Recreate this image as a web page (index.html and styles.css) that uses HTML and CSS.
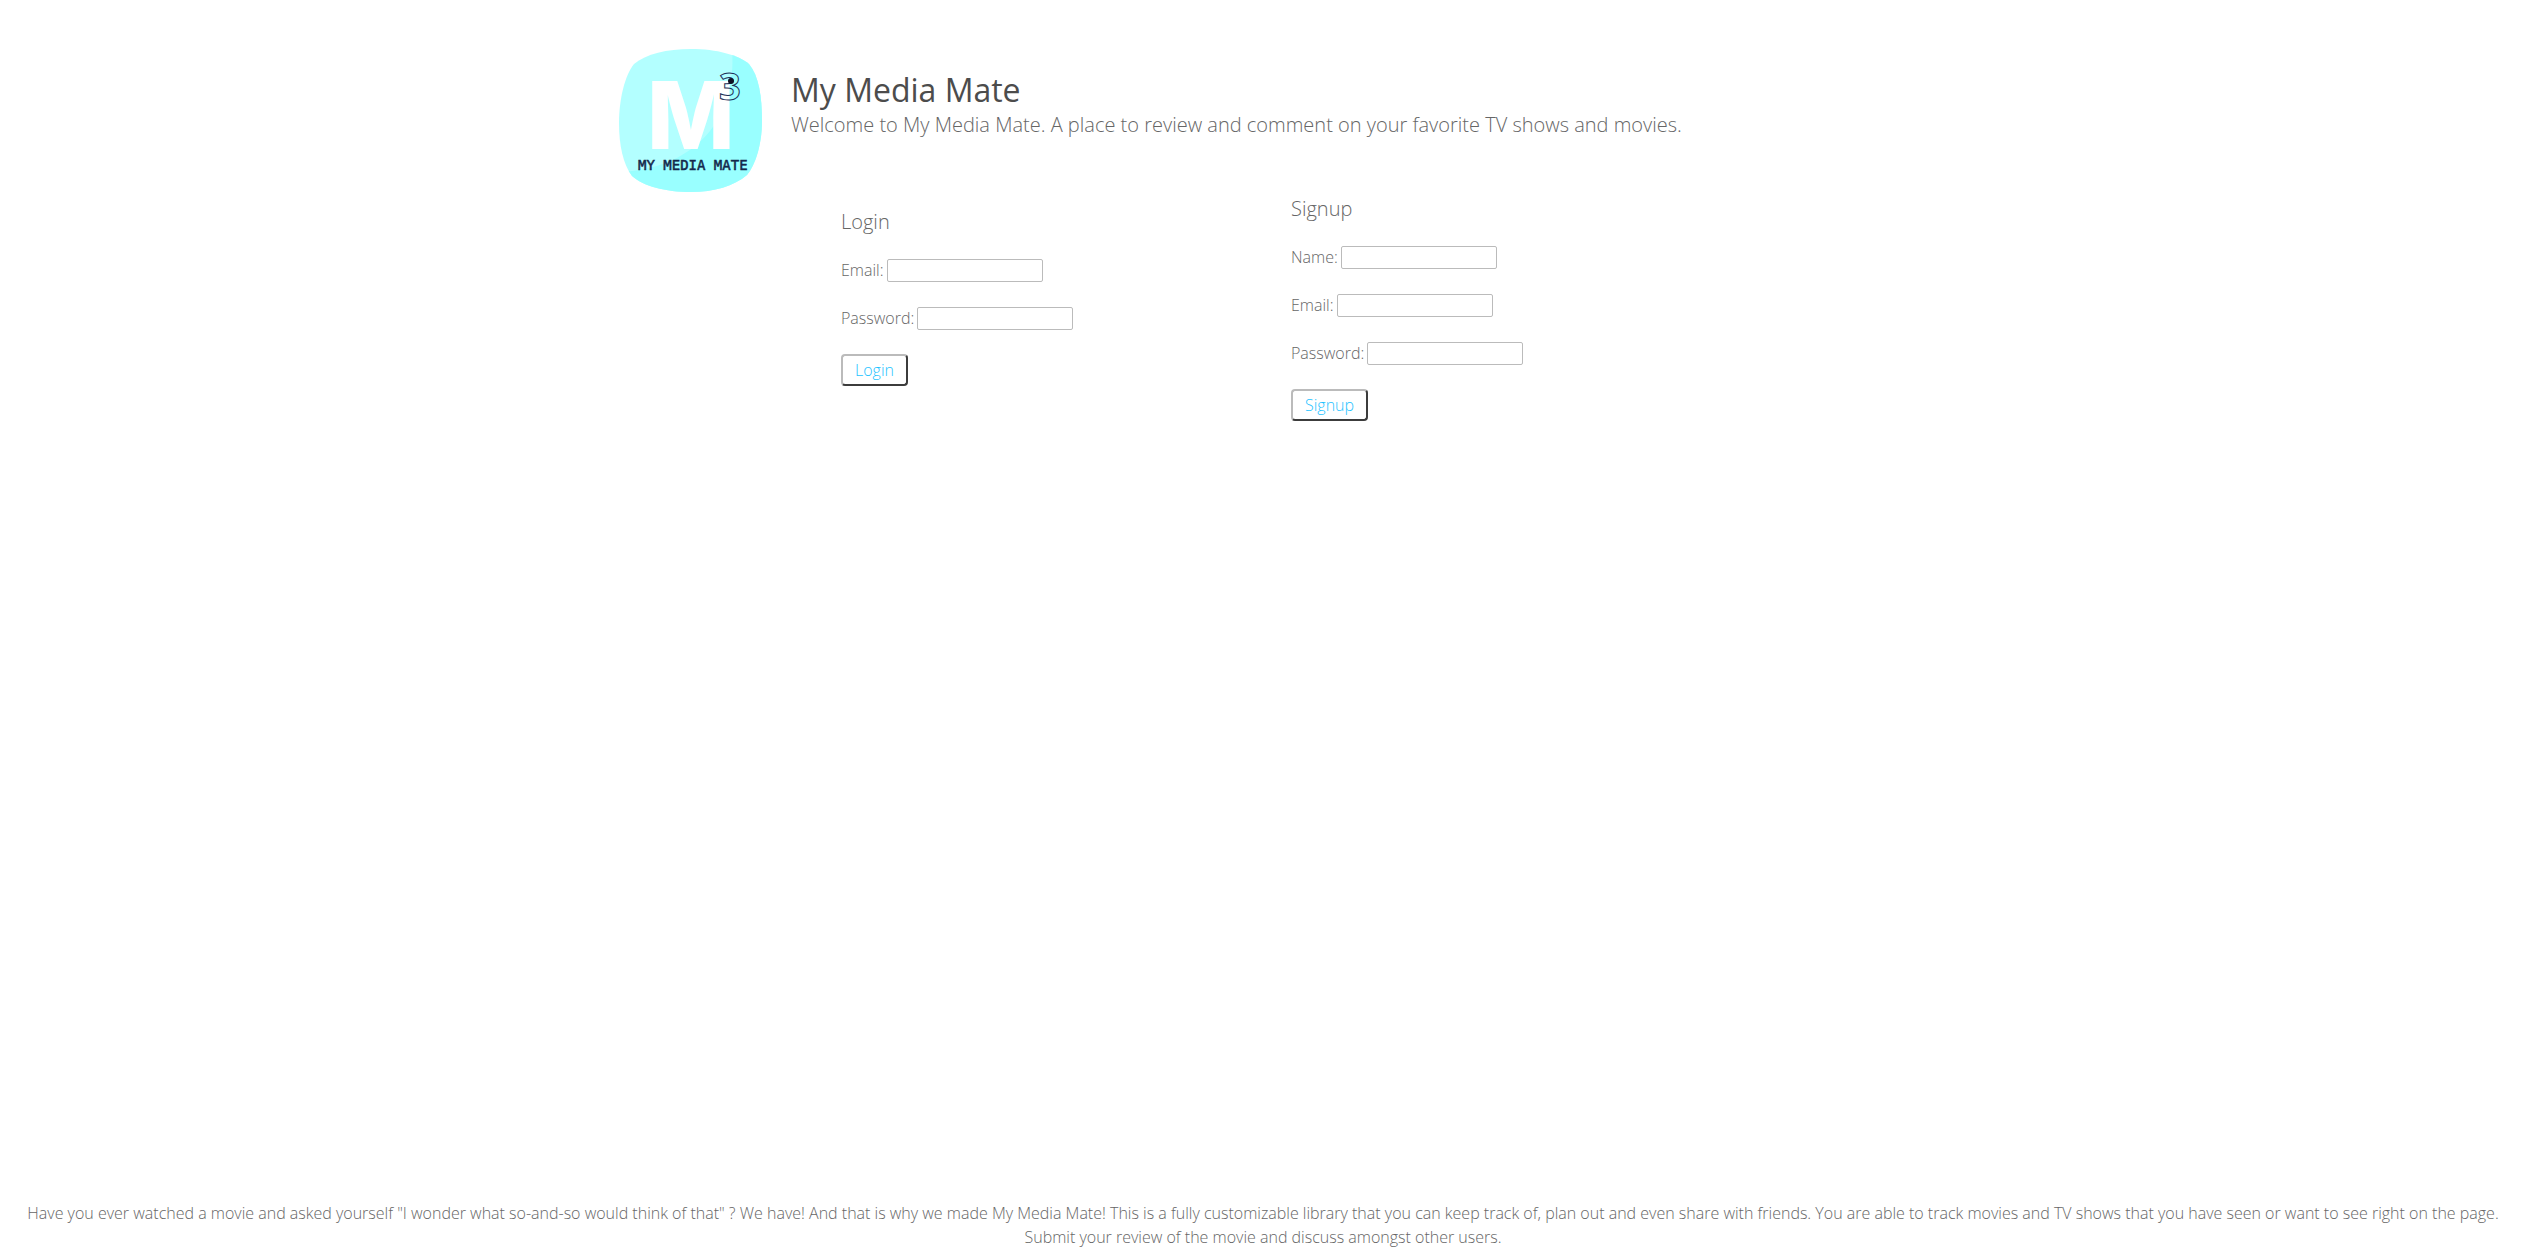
FILE: index.html
```html
<!DOCTYPE html>
<html lang="en">
<head>
<meta charset="utf-8">
<title>My Media Mate</title>
<link rel="stylesheet" href="styles.css">
</head>
<body>
<main class="page">
  <header class="masthead">
    <svg class="logo" viewBox="0 0 144 144" role="img" aria-label="My Media Mate logo">
      <defs><clipPath id="badge"><path d="M72 0C98 0 119 6 130 15C140 27 143 48 143 72C143 94 137 115 128 126C115 137 95 143 72 143C46 143 24 137 13 127C4 115 0 96 0 74C0 50 6 26 15 15C27 5 48 0 72 0Z"/></clipPath></defs>
      <g clip-path="url(#badge)">
        <rect width="144" height="144" fill="#b3ffff"/>
        <path d="M113 0H144V144H0V123C65 121 119 80 113 0Z" fill="#99ffff"/>
      </g>
      <text class="logo-m" x="28" y="100">M</text>
      <text class="logo-three" x="100" y="51">3</text>
      <circle cx="112" cy="32" r="3" fill="#112"/>
      <text class="logo-name" x="19" y="121">MY MEDIA MATE</text>
    </svg>
    <div class="intro">
      <h1 class="title">My Media Mate</h1>
      <p class="tagline">Welcome to My Media Mate. A place to review and comment on your favorite TV shows and movies.</p>
    </div>
  </header>
  <div class="forms">
    <form class="form form-login">
      <h2 class="form-title">Login</h2>
      <div class="field"><label for="login-email">Email:</label><input id="login-email" type="text"></div>
      <div class="field"><label for="login-password">Password:</label><input id="login-password" type="password"></div>
      <button class="submit" type="submit">Login</button>
    </form>
    <form class="form">
      <h2 class="form-title">Signup</h2>
      <div class="field"><label for="signup-name">Name:</label><input id="signup-name" type="text"></div>
      <div class="field"><label for="signup-email">Email:</label><input id="signup-email" type="text"></div>
      <div class="field"><label for="signup-password">Password:</label><input id="signup-password" type="password"></div>
      <button class="submit" type="submit">Signup</button>
    </form>
  </div>
</main>
<footer class="about">Have you ever watched a movie and asked yourself "I wonder what so-and-so would think of that" ? We have! And that is why we made My Media Mate! This is a fully customizable library that you can keep track of, plan out and even share with friends. You are able to track movies and TV shows that you have seen or want to see right on the page. Submit your review of the movie and discuss amongst other users.</footer>
</body>
</html>
```
FILE: styles.css
```css
* { box-sizing: border-box; }
body {
  margin: 0;
  min-height: 100vh;
  display: flex;
  flex-direction: column;
  background: #fff;
  color: #666;
  font: 300 16px/24px "Open Sans", "Noto Sans", sans-serif;
}
.page {
  flex: 1;
  width: 100%;
  max-width: 1306px;
  margin: 0 auto;
  padding-top: 49px;
}
.masthead { display: flex; gap: 28px; }
.logo { width: 144px; height: 144px; flex: none; }
.logo-m { font: 800 93px "Inter", sans-serif; fill: #fff; }
.logo-three { font: 700 38px "Noto Sans", sans-serif; fill: none; stroke: #1c3158; }
.logo-name { font: 400 14px "DejaVu Sans Mono", monospace; fill: #14284b; stroke: #14284b; stroke-width: 0.5; }
.intro { padding-top: 21px; }
.title { margin: 0; font-size: 32px; line-height: 40px; font-weight: 500; color: #4c4c4c; }
.tagline { margin: 0; font-size: 20px; line-height: 30px; }
.forms { display: grid; grid-template-columns: 450px auto; padding-left: 222px; align-items: start; }
.form { display: flex; flex-direction: column; align-items: flex-start; gap: 24px; }
.form-login { padding-top: 13px; }
.form-title { margin: 0 0 -4px; font-size: 20px; line-height: 32px; font-weight: 300; }
.field { display: flex; align-items: center; gap: 3px; }
.field input {
  width: 156px;
  height: 23px;
  padding: 1px 4px;
  border: 1px solid #bbb;
  border-radius: 2px;
  background: #fff;
}
.submit {
  height: 32px;
  padding: 0 12px;
  border: 2px solid;
  border-color: #bbb #3c3c3c #3c3c3c #bbb;
  border-radius: 4px;
  background: #fff;
  color: #1fc3ff;
  font: inherit;
}
.about { padding: 0 30px 11px 12px; text-align: center; }
```
